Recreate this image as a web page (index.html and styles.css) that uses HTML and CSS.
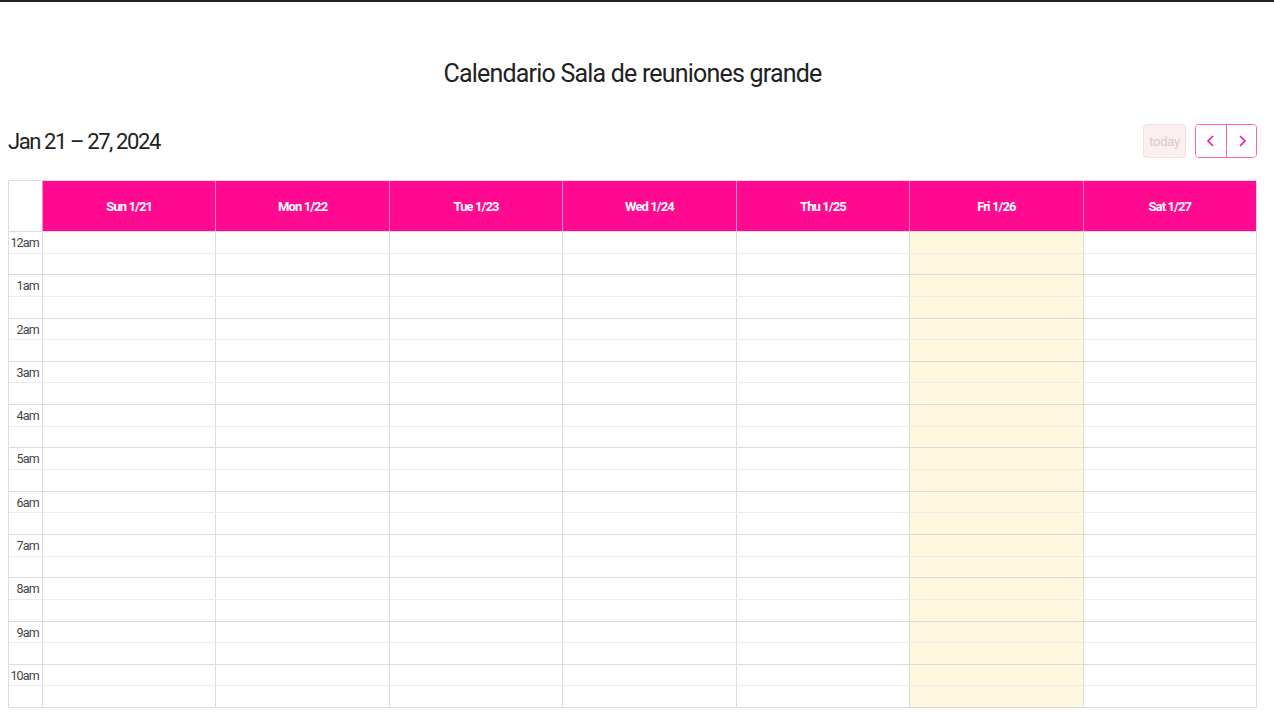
FILE: index.html
```html
<!DOCTYPE html>
<html lang="es">
<head>
<meta charset="utf-8">
<title>Calendario Sala de reuniones grande</title>
<link rel="stylesheet" href="styles.css">
</head>
<body>
<div class="page">
  <h1 class="title">Calendario Sala de reuniones grande</h1>
  <div class="toolbar">
    <h2 class="range">Jan 21 – 27, 2024</h2>
    <div class="actions">
      <button class="btn btn-today" disabled>today</button>
      <div class="btn-group">
        <button class="btn btn-nav" aria-label="prev"><svg viewBox="0 0 16 16" width="16" height="16"><path d="M10 3 5 8 10 13" fill="none" stroke="currentColor" stroke-width="1.6"/></svg></button>
        <button class="btn btn-nav" aria-label="next"><svg viewBox="0 0 16 16" width="16" height="16"><path d="M6 3 11 8 6 13" fill="none" stroke="currentColor" stroke-width="1.6"/></svg></button>
      </div>
    </div>
  </div>
  <div class="cal">
    <div class="cal-head">
      <div class="axis-head"></div>
      <div class="day-head">Sun 1/21</div>
      <div class="day-head">Mon 1/22</div>
      <div class="day-head">Tue 1/23</div>
      <div class="day-head">Wed 1/24</div>
      <div class="day-head">Thu 1/25</div>
      <div class="day-head">Fri 1/26</div>
      <div class="day-head">Sat 1/27</div>
    </div>
    <div class="cal-body">
      <div class="cols">
        <div class="axis-col"></div>
        <div class="day-col"></div>
        <div class="day-col"></div>
        <div class="day-col"></div>
        <div class="day-col"></div>
        <div class="day-col"></div>
        <div class="day-col today"></div>
        <div class="day-col"></div>
      </div>
      <div class="slats">
        <div class="slot"><span class="label">12am</span></div>
        <div class="slot hour"></div>
        <div class="slot"><span class="label">1am</span></div>
        <div class="slot hour"></div>
        <div class="slot"><span class="label">2am</span></div>
        <div class="slot hour"></div>
        <div class="slot"><span class="label">3am</span></div>
        <div class="slot hour"></div>
        <div class="slot"><span class="label">4am</span></div>
        <div class="slot hour"></div>
        <div class="slot"><span class="label">5am</span></div>
        <div class="slot hour"></div>
        <div class="slot"><span class="label">6am</span></div>
        <div class="slot hour"></div>
        <div class="slot"><span class="label">7am</span></div>
        <div class="slot hour"></div>
        <div class="slot"><span class="label">8am</span></div>
        <div class="slot hour"></div>
        <div class="slot"><span class="label">9am</span></div>
        <div class="slot hour"></div>
        <div class="slot"><span class="label">10am</span></div>
        <div class="slot hour"></div>
      </div>
    </div>
  </div>
</div>
</body>
</html>
```

FILE: styles.css
```css
* { box-sizing: border-box; }
html, body { margin: 0; padding: 0; }
body {
  font-family: Roboto, "Liberation Sans", sans-serif;
  color: #222;
  background: #fff;
  border-top: 2px solid #222;
  height: 712px;
  overflow: hidden;
}
.page {
  padding: 0 17px 0 8px;
}
.title {
  margin: 56px 0 0;
  height: 32px;
  line-height: 32px;
  font-size: 25px;
  font-weight: 400;
  text-align: center;
  color: #222;
  letter-spacing: -0.8px;
}
.toolbar {
  margin-top: 34px;
  height: 34px;
  display: flex;
  align-items: center;
  justify-content: space-between;
}
.range {
  margin: 0;
  font-size: 22px;
  font-weight: 400;
  color: #222;
  letter-spacing: -1.4px;
}
.actions {
  display: flex;
  gap: 9px;
  align-items: center;
}
.btn {
  height: 34px;
  font-family: inherit;
  font-size: 13px;
  border-radius: 4px;
  padding: 0;
  display: flex;
  align-items: center;
  justify-content: center;
}
.btn-today {
  width: 43px;
  background: #fbefef;
  border: 1px solid #f1e1e1;
  color: #dacbcb;
  letter-spacing: -0.3px;
}
.btn-group {
  display: flex;
  border: 1px solid #ff5fae;
  border-radius: 4px;
  overflow: hidden;
}
.btn-nav {
  width: 30px;
  height: 32px;
  border: none;
  border-radius: 0;
  background: #fff;
  color: #ff1493;
}
.btn-nav + .btn-nav {
  border-left: 1px solid #ff5fae;
}
.cal {
  margin-top: 22px;
  border: 1px solid #ddd;
  border-bottom: none;
}
.cal-head {
  display: grid;
  grid-template-columns: 33px repeat(7, 1fr);
  height: 51px;
  border-bottom: 1px solid #ddd;
}
.day-head {
  background: #ff0a91;
  color: #fff;
  font-weight: 700;
  font-size: 13px;
  letter-spacing: -0.9px;
  display: flex;
  align-items: center;
  justify-content: center;
  border-left: 1px solid #f78bc2;
}
.cal-body {
  display: grid;
}
.cols, .slats {
  grid-area: 1 / 1;
}
.cols {
  display: grid;
  grid-template-columns: 33px repeat(7, 1fr);
}
.day-col {
  border-left: 1px solid #ddd;
}
.day-col.today {
  background: #fdf7dd;
}
.slot {
  height: 21.65px;
  border-bottom: 1px solid #ececec;
  display: flex;
}
.slot.hour {
  border-bottom-color: #dcdcdc;
}
.label {
  width: 33px;
  text-align: right;
  padding: 3px 3px 0 0;
  font-size: 12.5px;
  line-height: 15px;
  color: #444;
  letter-spacing: -0.8px;
}
```
